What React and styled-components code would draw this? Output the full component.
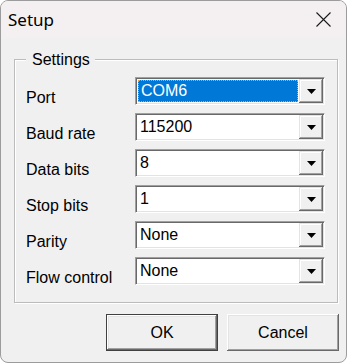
import React from 'react'
import styled, { createGlobalStyle } from 'styled-components'

const Global = createGlobalStyle`
  html, body {
    margin: 0;
    padding: 0;
    background: #ffffff;
  }
  * { box-sizing: border-box; }
`

const Win = styled.div`
  width: 347px;
  height: 363px;
  border: 1px solid #9c9c9c;
  border-radius: 8px;
  overflow: hidden;
  background: #f0f0f0;
  display: flex;
  flex-direction: column;
  font-family: "Liberation Sans", Arial, sans-serif;
  font-size: 16px;
  color: #000;
`

const TitleBar = styled.div`
  height: 37px;
  flex: none;
  display: flex;
  align-items: center;
  justify-content: space-between;
  padding: 0 14px 0 7px;
  background: #f4f0f1;
`

const Title = styled.span`
  font-family: "Noto Sans", "Open Sans", sans-serif;
  font-size: 17px;
  line-height: 20px;
  margin-top: 1px;
`

const CloseBtn = styled.div`
  width: 17px;
  height: 17px;
  display: flex;
  align-items: center;
  justify-content: center;
`

const Client = styled.div`
  flex: 1;
  padding: 21px 7px 0 13px;
  display: flex;
  flex-direction: column;
`

const GroupBox = styled.div`
  position: relative;
  width: 324px;
  border: 1px solid #bcbcbc;
  box-shadow: inset 1px 1px 0 #ffffff, 1px 1px 0 #ffffff;
  padding: 17px 11px 17px 11px;
`

const GroupLabel = styled.span`
  position: absolute;
  top: -9px;
  left: 11px;
  padding: 0 5px 0 6px;
  line-height: 18px;
  background: #f0f0f0;
`

const Rows = styled.div`
  display: grid;
  grid-template-columns: 109px 190px;
  row-gap: 8px;
`

const Label = styled.span`
  height: 28px;
  padding-top: 12px;
  line-height: 18px;
  white-space: nowrap;
`

const Combo = styled.div`
  height: 28px;
  display: flex;
  border-top: 1px solid #a0a0a0;
  border-left: 1px solid #a0a0a0;
  border-bottom: 1px solid #ffffff;
  border-right: 1px solid #ffffff;
  box-shadow: inset 1px 1px 0 #696969, inset -1px -1px 0 #e3e3e3;
  background: #ffffff;
  padding: 1px;
`

const Value = styled.div`
  flex: 1;
  display: flex;
  align-items: center;
  margin: 1px;
  padding-left: ${p => (p.$selected ? '3px' : '2px')};
  line-height: 18px;
  background: ${p => (p.$selected ? '#0078d7' : 'transparent')};
  color: ${p => (p.$selected ? '#ffffff' : '#000000')};
  outline: ${p => (p.$selected ? '1px dotted #f0a040' : 'none')};
  outline-offset: -1px;
`

const DropBtn = styled.div`
  width: 24px;
  flex: none;
  display: flex;
  align-items: center;
  justify-content: center;
  background: #f0f0f0;
  box-shadow: inset -1px -1px 0 #696969, inset 1px 1px 0 #e3e3e3,
    inset -2px -2px 0 #a0a0a0, inset 2px 2px 0 #ffffff;
`

const Buttons = styled.div`
  display: flex;
  justify-content: flex-end;
  gap: 9px;
  margin-top: 11px;
`

const PushButton = styled.button`
  width: 112px;
  height: 37px;
  font-family: "Liberation Sans", Arial, sans-serif;
  font-size: 16px;
  color: #000;
  background: #f0f0f0;
  padding: 0;
  border: ${p => (p.$default ? '1px solid #404040' : 'none')};
  box-shadow: inset -1px -1px 0 #696969, inset 1px 1px 0 #ffffff,
    inset -2px -2px 0 #a0a0a0, inset 2px 2px 0 #e3e3e3;
`

const Arrow = () => (
  <svg width="9" height="5" viewBox="0 0 9 5">
    <polygon points="0,0 9,0 4.5,5" fill="#000" />
  </svg>
)

const fields = [
  { label: 'Port', value: 'COM6', selected: true },
  { label: 'Baud rate', value: '115200' },
  { label: 'Data bits', value: '8' },
  { label: 'Stop bits', value: '1' },
  { label: 'Parity', value: 'None' },
  { label: 'Flow control', value: 'None' },
]

export default function App() {
  return (
    <>
      <Global />
      <Win>
        <TitleBar>
          <Title>Setup</Title>
          <CloseBtn>
            <svg width="17" height="17" viewBox="0 0 17 17">
              <path d="M1.5 1.5 L15.5 15.5 M15.5 1.5 L1.5 15.5" stroke="#1a1a1a" strokeWidth="1.1" />
            </svg>
          </CloseBtn>
        </TitleBar>
        <Client>
          <GroupBox>
            <GroupLabel>Settings</GroupLabel>
            <Rows>
              {fields.map(f => (
                <React.Fragment key={f.label}>
                  <Label>{f.label}</Label>
                  <Combo>
                    <Value $selected={f.selected}>{f.value}</Value>
                    <DropBtn><Arrow /></DropBtn>
                  </Combo>
                </React.Fragment>
              ))}
            </Rows>
          </GroupBox>
          <Buttons>
            <PushButton $default>OK</PushButton>
            <PushButton>Cancel</PushButton>
          </Buttons>
        </Client>
      </Win>
    </>
  )
}
